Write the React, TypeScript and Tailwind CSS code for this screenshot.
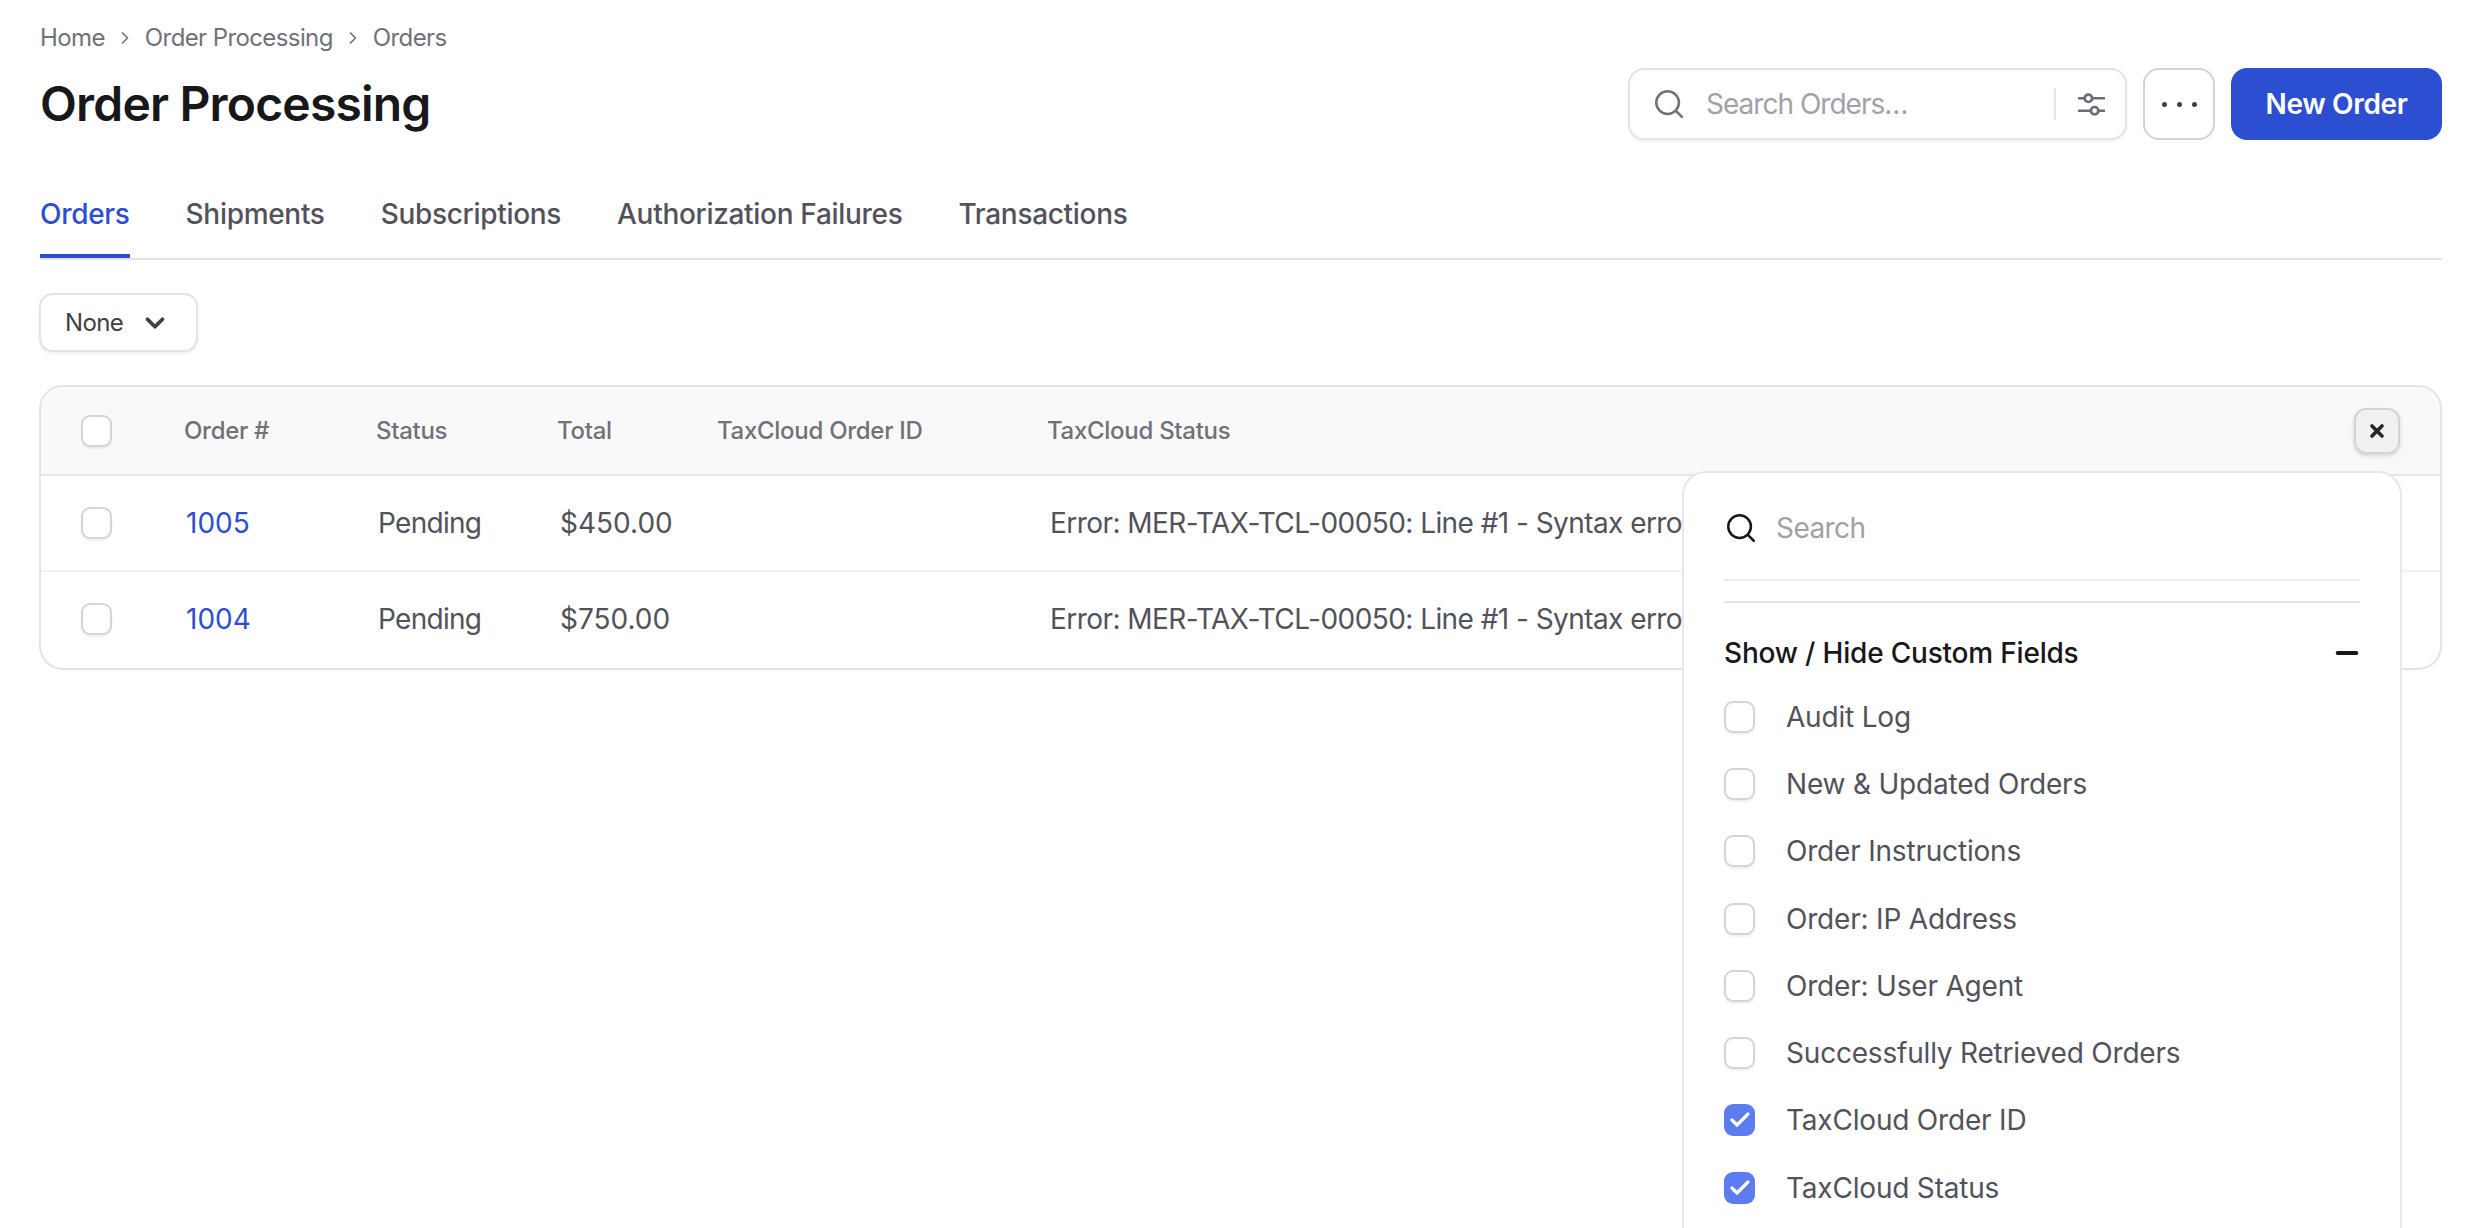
import { Check, ChevronDown, ChevronRight, Minus, Search, X } from "lucide-react";

const tabs = ["Orders", "Shipments", "Subscriptions", "Authorization Failures", "Transactions"];

const orders = [
  { id: "1005", total: "$450.00" },
  { id: "1004", total: "$750.00" },
];

const customFields = [
  { label: "Audit Log", checked: false },
  { label: "New & Updated Orders", checked: false },
  { label: "Order Instructions", checked: false },
  { label: "Order: IP Address", checked: false },
  { label: "Order: User Agent", checked: false },
  { label: "Successfully Retrieved Orders", checked: false },
  { label: "TaxCloud Order ID", checked: true },
  { label: "TaxCloud Status", checked: true },
];

const errorText = "Error: MER-TAX-TCL-00050: Line #1 - Syntax erro";

const Box = ({ checked = false }: { checked?: boolean }) =>
  checked ? (
    <span className="flex w-[31px] h-[32px] shrink-0 items-center justify-center rounded-[9px] bg-[#5c7cf0]">
      <Check className="w-[24px] h-[24px] text-white" strokeWidth={3.2} />
    </span>
  ) : (
    <span className="block w-[31px] h-[32px] shrink-0 rounded-[9px] border-2 border-[#d4d4db] bg-white shadow-[0_2px_2px_rgba(0,0,0,0.06)]" />
  );

const Sliders = () => (
  <svg viewBox="0 0 26 26" className="w-[27px] h-[27px] text-[#6b6b75]" fill="none" stroke="currentColor" strokeWidth="2.6" strokeLinecap="round">
    <path d="M1 7h5M14 7h11M1 19h11M20 19h5" />
    <circle cx="10" cy="7" r="3.6" />
    <circle cx="16" cy="19" r="3.6" />
  </svg>
);

export default function App() {
  return (
    <div className="relative h-screen overflow-hidden bg-white pl-[40px] pr-[26px] font-['Inter',sans-serif]">
      {/* Breadcrumb */}
      <nav className="flex h-[76px] items-center gap-[10px] text-[24px] tracking-[-0.025em] text-[#71717a]">
        <span>Home</span>
        <ChevronRight className="w-[20px] h-[20px]" strokeWidth={2} />
        <span>Order Processing</span>
        <ChevronRight className="w-[20px] h-[20px]" strokeWidth={2} />
        <span>Orders</span>
      </nav>

      {/* Title and actions */}
      <div className="flex h-[64px] items-center justify-between -mt-[4px]">
        <h1 className="text-[48px] leading-none font-semibold tracking-[-0.017em] text-[#18181b]">Order Processing</h1>
        <div className="flex items-center">
          <div className="flex h-[72px] w-[499px] items-center rounded-[16px] border-2 border-[#e4e4e7] bg-white pl-[22px] pr-[20px] shadow-[0_2px_3px_rgba(0,0,0,0.06)]">
            <Search className="w-[34px] h-[34px] text-[#71717a]" strokeWidth={1.8} />
            <span className="ml-[20px] flex-1 text-[28px] tracking-[-0.035em] text-[#a1a1aa]">Search Orders…</span>
            <span className="mr-[22px] h-[32px] w-[2px] bg-[#e4e4e7]" />
            <Sliders />
          </div>
          <button className="ml-[16px] flex h-[72px] w-[72px] items-center justify-center rounded-[16px] border-2 border-[#d4d4d8] bg-white">
            <span className="flex gap-[10px]">
              <span className="h-[5px] w-[5px] rounded-full bg-[#3f3f46]" />
              <span className="h-[5px] w-[5px] rounded-full bg-[#3f3f46]" />
              <span className="h-[5px] w-[5px] rounded-full bg-[#3f3f46]" />
            </span>
          </button>
          <button className="ml-[16px] h-[72px] w-[211px] rounded-[16px] bg-[#2c4fd1] text-[28px] font-semibold tracking-[-0.012em] text-white">New Order</button>
        </div>
      </div>

      {/* Tabs */}
      <div className="mt-[42px] flex h-[82px] gap-[56px] border-b-2 border-[#e4e4e7]">
        {tabs.map((tab, i) => (
          <div
            key={tab}
            className={`flex h-[80px] items-center border-b-4 pb-[5px] text-[28px] font-medium tracking-[-0.011em] ${i === 0 ? "border-[#2c4fd1] text-[#2c4fd1]" : "border-transparent text-[#52525b]"}`}
          >
            {tab}
          </div>
        ))}
      </div>

      {/* Filter */}
      <button className="-ml-px mt-[33px] flex h-[59px] w-[159px] items-center justify-between rounded-[14px] border-2 border-[#e4e4e7] bg-white pl-[24px] pr-[26px] text-[24px] tracking-[-0.025em] text-[#3f3f46] shadow-[0_2px_3px_rgba(0,0,0,0.06)]">
        None
        <ChevronDown className="w-[30px] h-[30px]" strokeWidth={3} />
      </button>

      {/* Table */}
      <div className="-ml-px mt-[33px] overflow-hidden rounded-[24px] border-2 border-[#e4e4e7]">
        <div className="relative flex h-[89px] items-center border-b-2 border-[#e4e4e7] bg-[#f9f9fa] text-[24px] font-medium tracking-[-0.012em] text-[#71717a]">
          <span className="ml-[40px] mr-[72px]">
            <Box />
          </span>
          <span className="w-[192px]">Order #</span>
          <span className="w-[181px]">Status</span>
          <span className="w-[160px]">Total</span>
          <span className="w-[330px]">TaxCloud Order ID</span>
          <span>TaxCloud Status</span>
          <button className="ml-auto mr-[40px] flex h-[46px] w-[46px] items-center justify-center rounded-[12px] border-2 border-[#d4d4d8] bg-[#f1f1f3] shadow-[0_2px_4px_rgba(0,0,0,0.15)]">
            <X className="w-[20px] h-[20px] text-[#27272a]" strokeWidth={4.4} />
          </button>
        </div>
        {orders.map((order, i) => (
          <div key={order.id} className={`flex h-[96px] items-center text-[28px] text-[#52525b] ${i === 0 ? "border-b-2 border-[#f0f0f2]" : "pb-[2px]"}`}>
            <span className="ml-[40px] mr-[74px]">
              <Box />
            </span>
            <span className="w-[192px] text-[#2c4fd1]">{order.id}</span>
            <span className="w-[182px] tracking-[-0.025em]">Pending</span>
            <span className="w-[490px]">{order.total}</span>
            <span className="whitespace-nowrap tracking-[-0.02em]">{errorText}</span>
          </div>
        ))}
      </div>

      {/* Column picker */}
      <div className="absolute left-[1682px] top-[471px] w-[720px] rounded-t-[24px] border-2 border-[#e8e8eb] bg-white px-[40px] pb-[40px]">
        <div className="flex h-[108px] items-center gap-[18px] border-b-2 border-[#ececef] pt-[4px]">
          <Search className="w-[34px] h-[34px] text-[#18181b]" strokeWidth={1.8} />
          <span className="text-[28px] tracking-[-0.02em] text-[#a1a1aa]">Search</span>
        </div>
        <div className="mt-[20px] flex h-[76px] items-center justify-between border-t-2 border-[#e4e4e7] pt-[26px] text-[28px] font-medium tracking-[-0.007em] text-[#18181b]">
          Show / Hide Custom Fields
          <Minus className="-mr-[3px] w-[32px] h-[32px]" strokeWidth={3} />
        </div>
        <div className="mt-[6px]">
          {customFields.map((field) => (
            <label key={field.label} className="flex h-[67.3px] items-center gap-[31px] text-[28px] tracking-[-0.007em] text-[#52525b]">
              <Box checked={field.checked} />
              {field.label}
            </label>
          ))}
        </div>
      </div>
    </div>
  );
}
